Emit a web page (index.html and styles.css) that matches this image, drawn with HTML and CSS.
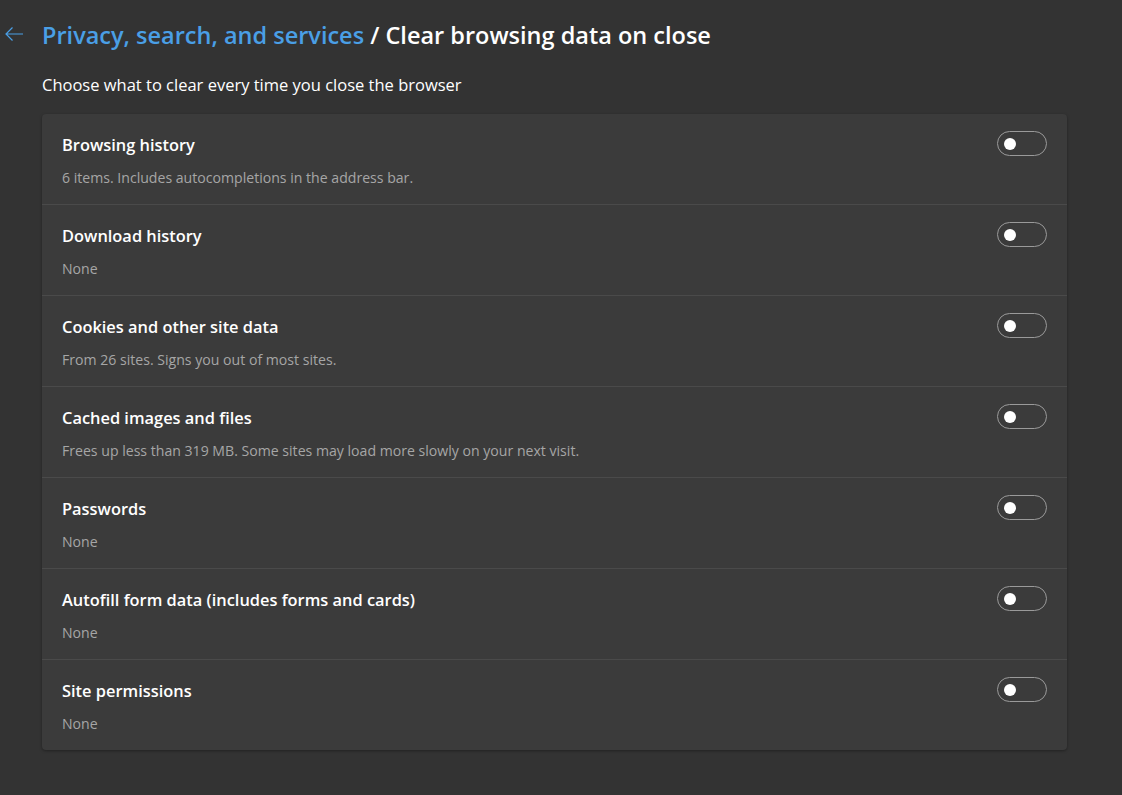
FILE: index.html
```html
<!DOCTYPE html>
<html lang="en">
<head>
<meta charset="utf-8">
<title>Clear browsing data on close</title>
<link rel="stylesheet" href="styles.css">
</head>
<body>
<div class="page">
  <header class="header">
    <button class="back" aria-label="Back">
      <svg width="20" height="16" viewBox="0 0 20 16"><path d="M19 8H2M8.5 1.5L2 8l6.5 6.5" fill="none" stroke="#4a9fe6" stroke-width="1.2"/></svg>
    </button>
    <h1 class="title"><span class="crumb">Privacy, search, and services</span> / Clear browsing data on close</h1>
  </header>
  <p class="intro">Choose what to clear every time you close the browser</p>
  <section class="card">
    <div class="row">
      <div class="text"><div class="label">Browsing history</div><div class="desc">6 items. Includes autocompletions in the address bar.</div></div>
      <span class="toggle"><span class="knob"></span></span>
    </div>
    <div class="row">
      <div class="text"><div class="label">Download history</div><div class="desc">None</div></div>
      <span class="toggle"><span class="knob"></span></span>
    </div>
    <div class="row">
      <div class="text"><div class="label">Cookies and other site data</div><div class="desc">From 26 sites. Signs you out of most sites.</div></div>
      <span class="toggle"><span class="knob"></span></span>
    </div>
    <div class="row">
      <div class="text"><div class="label">Cached images and files</div><div class="desc">Frees up less than 319 MB. Some sites may load more slowly on your next visit.</div></div>
      <span class="toggle"><span class="knob"></span></span>
    </div>
    <div class="row">
      <div class="text"><div class="label">Passwords</div><div class="desc">None</div></div>
      <span class="toggle"><span class="knob"></span></span>
    </div>
    <div class="row">
      <div class="text"><div class="label">Autofill form data (includes forms and cards)</div><div class="desc">None</div></div>
      <span class="toggle"><span class="knob"></span></span>
    </div>
    <div class="row">
      <div class="text"><div class="label">Site permissions</div><div class="desc">None</div></div>
      <span class="toggle"><span class="knob"></span></span>
    </div>
  </section>
</div>
</body>
</html>
```
FILE: styles.css
```css
html, body {
  margin: 0;
  padding: 0;
  background: #333333;
  height: 100%;
}
body {
  font-family: "Open Sans", "Noto Sans", sans-serif;
  color: #ffffff;
}
.page {
  padding: 16px 55px 0 42px;
}
.header {
  display: flex;
  align-items: center;
  height: 38px;
  position: relative;
}
.back {
  position: absolute;
  left: -38px;
  top: 10px;
  width: 20px;
  height: 16px;
  padding: 0;
  border: 0;
  background: none;
  display: flex;
}
.title {
  margin: 0;
  font-size: 23.5px;
  font-weight: 600;
  color: #ffffff;
}
.crumb {
  color: #4a9fe6;
}
.intro {
  margin: 0;
  padding: 20px 0 18px;
  font-size: 16.5px;
  line-height: 22px;
}
.card {
  background: #3b3b3b;
  border-radius: 4px;
  box-shadow: 0 1px 3px rgba(0,0,0,0.35);
}
.row {
  display: flex;
  justify-content: space-between;
  align-items: flex-start;
  height: 91px;
  padding: 0 20px;
  border-top: 1px solid #4a4a4a;
  box-sizing: border-box;
}
.row:first-child {
  border-top: 0;
  height: 90px;
}
.text {
  padding-top: 19px;
}
.label {
  font-size: 16.4px;
  font-weight: 600;
  line-height: 24px;
}
.desc {
  margin-top: 11px;
  font-size: 14.1px;
  line-height: 20px;
  color: #a6a6a6;
}
.toggle {
  margin-top: 17px;
  height: 23px;
  border: 1px solid #9a9a9a;
  border-radius: 13px;
  display: flex;
  align-items: center;
  padding-left: 6px;
  box-sizing: content-box;
  width: 42px;
}
.knob {
  width: 12px;
  height: 12px;
  border-radius: 50%;
  background: #ffffff;
}
```
